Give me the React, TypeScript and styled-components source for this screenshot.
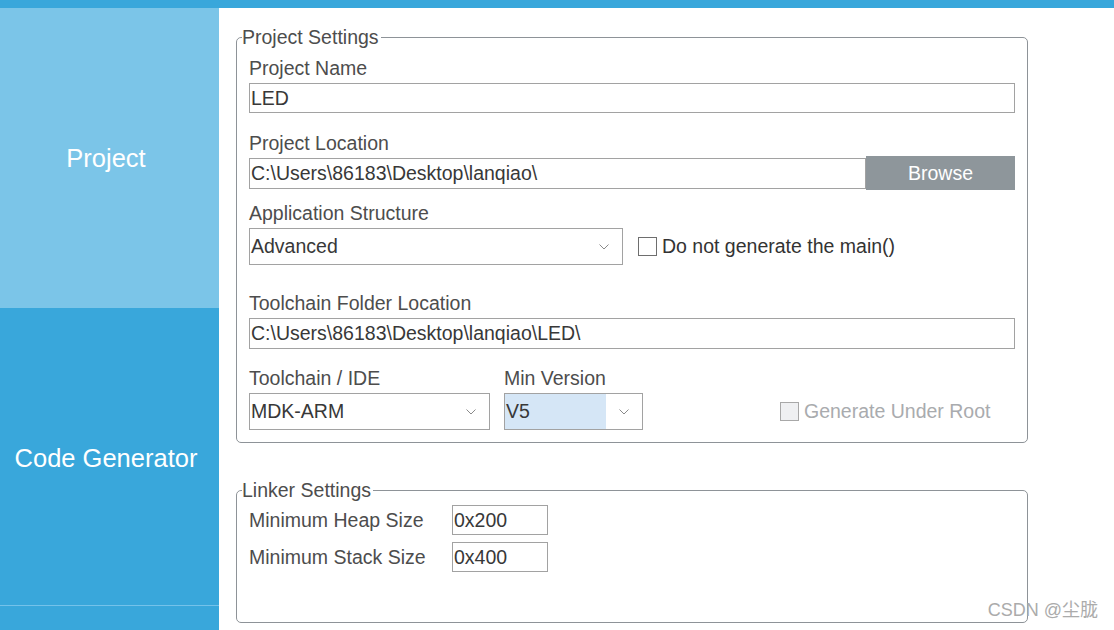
import React from "react";
import styled, { createGlobalStyle } from "styled-components";

const GlobalStyle = createGlobalStyle`
  html, body {
    margin: 0;
    padding: 0;
    background: #fff;
    overflow: hidden;
  }
  body {
    font-family: "Liberation Sans", Arial, sans-serif;
  }
`;

const Page = styled.div`
  position: relative;
  width: 1114px;
  height: 630px;
  display: flex;
  flex-direction: column;
  overflow: hidden;
  background: #fff;
`;

const TopBar = styled.div`
  flex: none;
  height: 8px;
  background: #39a7db;
`;

const Body = styled.div`
  flex: 1;
  display: flex;
  min-height: 0;
`;

const Sidebar = styled.nav`
  flex: none;
  width: 219px;
  display: flex;
  flex-direction: column;
  background: #39a7db;
`;

const Tab = styled.div<{ $active?: boolean; $height: number }>`
  flex: none;
  height: ${({ $height }) => $height}px;
  box-sizing: border-box;
  display: flex;
  align-items: center;
  justify-content: center;
  padding: ${({ $active }) => ($active ? "0 7px 0 0" : "4px 7px 0 0")};
  font-size: 25.5px;
  color: #fff;
  background: ${({ $active }) => ($active ? "#7bc5e8" : "#39a7db")};
  border-bottom: ${({ $active }) => ($active ? "none" : "1px solid #74c2ea")};
`;

const Main = styled.main`
  flex: 1;
  display: flex;
  flex-direction: column;
  gap: 36px;
  padding: 18px 0 0 17px;
`;

const Group = styled.fieldset`
  width: 792px;
  box-sizing: border-box;
  min-width: 0;
  margin: 0;
  padding: 0;
  border: 1px solid #8e9398;
  border-radius: 5px;
`;

const Legend = styled.legend`
  margin-left: 5px;
  padding: 0 2px 0 0;
  font-size: 19.5px;
  line-height: 22px;
  color: #4d4d4d;
`;

const GroupBody = styled.div<{ $pad: string; $gap?: number }>`
  display: flex;
  flex-direction: column;
  gap: ${({ $gap }) => $gap ?? 0}px;
  padding: ${({ $pad }) => $pad};
`;

const Field = styled.div<{ $mt?: number }>`
  display: flex;
  flex-direction: column;
  gap: 4px;
  margin-top: ${({ $mt }) => $mt ?? 0}px;
`;

const Label = styled.div`
  font-size: 19.5px;
  line-height: 22px;
  color: #4d4d4d;
  white-space: nowrap;
`;

const TextInput = styled.input<{ $h: number; $w?: number }>`
  box-sizing: border-box;
  width: ${({ $w }) => ($w ? `${$w}px` : "100%")};
  height: ${({ $h }) => $h}px;
  margin: 0;
  padding: 0 0 0 1px;
  border: 1px solid #a2a2a2;
  border-radius: 0;
  outline: none;
  font-family: "Liberation Sans", Arial, sans-serif;
  font-size: 19.5px;
  color: #383838;
  background: #fff;
`;

const BrowseRow = styled.div`
  display: flex;
  align-items: center;
  height: 34px;
  margin-top: 2px;
`;

const BrowseButton = styled.button`
  flex: none;
  width: 149px;
  height: 34px;
  margin: 0;
  border: none;
  border-radius: 0;
  background: #8e969b;
  color: #fff;
  font-family: "Liberation Sans", Arial, sans-serif;
  font-size: 19.5px;
`;

const SelectRow = styled.div`
  display: flex;
  align-items: center;
  gap: 15px;
`;

const Select = styled.div<{ $w: number }>`
  box-sizing: border-box;
  width: ${({ $w }) => $w}px;
  height: 37px;
  display: flex;
  border: 1px solid #a2a2a2;
  background: #fff;
`;

const SelectValue = styled.div<{ $highlight?: boolean }>`
  flex: 1;
  display: flex;
  align-items: center;
  padding-left: 1px;
  font-size: 19.5px;
  color: #383838;
  background: ${({ $highlight }) => ($highlight ? "#d5e6f6" : "transparent")};
`;

const Chevron = styled.div`
  flex: none;
  width: 36px;
  display: flex;
  align-items: center;
  justify-content: center;
`;

const Check = styled.label<{ $disabled?: boolean }>`
  display: flex;
  align-items: center;
  gap: 5px;
  font-size: 19.5px;
  color: ${({ $disabled }) => ($disabled ? "#a9abae" : "#333")};
  white-space: nowrap;
`;

const CheckBox = styled.span<{ $disabled?: boolean }>`
  box-sizing: border-box;
  width: 19px;
  height: 19px;
  border: 1px solid ${({ $disabled }) => ($disabled ? "#a8a8a8" : "#6e6e6e")};
  background: ${({ $disabled }) => ($disabled ? "#eff0f2" : "#fff")};
`;

const ToolRow = styled.div`
  display: flex;
  align-items: flex-end;
  gap: 14px;
  margin-top: 18px;
`;

const ToolColumn = styled.div`
  display: flex;
  flex-direction: column;
  gap: 4px;
`;

const RootCheck = styled.div`
  height: 37px;
  display: flex;
  align-items: center;
  margin-left: 123px;
`;

const LinkerRow = styled.div`
  display: grid;
  grid-template-columns: 203px 96px;
  align-items: center;
  height: 30px;
`;

const Watermark = styled.div`
  position: absolute;
  right: 16px;
  bottom: 10px;
  font-family: "Liberation Sans", "Noto Sans CJK SC", sans-serif;
  font-size: 18px;
  line-height: 20px;
  color: #ababab;
`;

const ChevronIcon = () => (
  <svg width="10" height="6" viewBox="0 0 10 6">
    <polyline points="0.5,0.5 5,5 9.5,0.5" fill="none" stroke="#8a8a8a" strokeWidth="1" />
  </svg>
);

type DropdownProps = { value: string; width: number; highlight?: boolean };

const Dropdown = ({ value, width, highlight }: DropdownProps) => (
  <Select $w={width}>
    <SelectValue $highlight={highlight}>{value}</SelectValue>
    <Chevron>
      <ChevronIcon />
    </Chevron>
  </Select>
);

export default function App() {
  return (
    <Page>
      <GlobalStyle />
      <TopBar />
      <Body>
        <Sidebar>
          <Tab $active $height={300}>Project</Tab>
          <Tab $height={298}>Code Generator</Tab>
        </Sidebar>
        <Main>
          <Group>
            <Legend>Project Settings</Legend>
            <GroupBody $pad="9px 12px 12px 12px">
              <Field>
                <Label>Project Name</Label>
                <TextInput $h={30} readOnly value="LED" />
              </Field>
              <Field $mt={19}>
                <Label>Project Location</Label>
              </Field>
              <BrowseRow>
                <TextInput $h={31} readOnly value="C:\Users\86183\Desktop\lanqiao\" />
                <BrowseButton>Browse</BrowseButton>
              </BrowseRow>
              <Field $mt={12}>
                <Label>Application Structure</Label>
                <SelectRow>
                  <Dropdown value="Advanced" width={374} />
                  <Check>
                    <CheckBox />
                    Do not generate the main()
                  </Check>
                </SelectRow>
              </Field>
              <Field $mt={27}>
                <Label>Toolchain Folder Location</Label>
                <TextInput $h={31} readOnly value="C:\Users\86183\Desktop\lanqiao\LED\" />
              </Field>
              <ToolRow>
                <ToolColumn>
                  <Label>Toolchain / IDE</Label>
                  <Dropdown value="MDK-ARM" width={241} />
                </ToolColumn>
                <ToolColumn>
                  <Label>Min Version</Label>
                  <Dropdown value="V5" width={139} highlight />
                </ToolColumn>
                <RootCheck>
                  <Check $disabled>
                    <CheckBox $disabled />
                    Generate Under Root
                  </Check>
                </RootCheck>
              </ToolRow>
            </GroupBody>
          </Group>

          <Group>
            <Legend>Linker Settings</Legend>
            <GroupBody $pad="4px 12px 50px 12px" $gap={7}>
              <LinkerRow>
                <Label>Minimum Heap Size</Label>
                <TextInput $h={30} $w={96} readOnly value="0x200" />
              </LinkerRow>
              <LinkerRow>
                <Label>Minimum Stack Size</Label>
                <TextInput $h={30} $w={96} readOnly value="0x400" />
              </LinkerRow>
            </GroupBody>
          </Group>
        </Main>
      </Body>
      <Watermark>CSDN @尘胧</Watermark>
    </Page>
  );
}
